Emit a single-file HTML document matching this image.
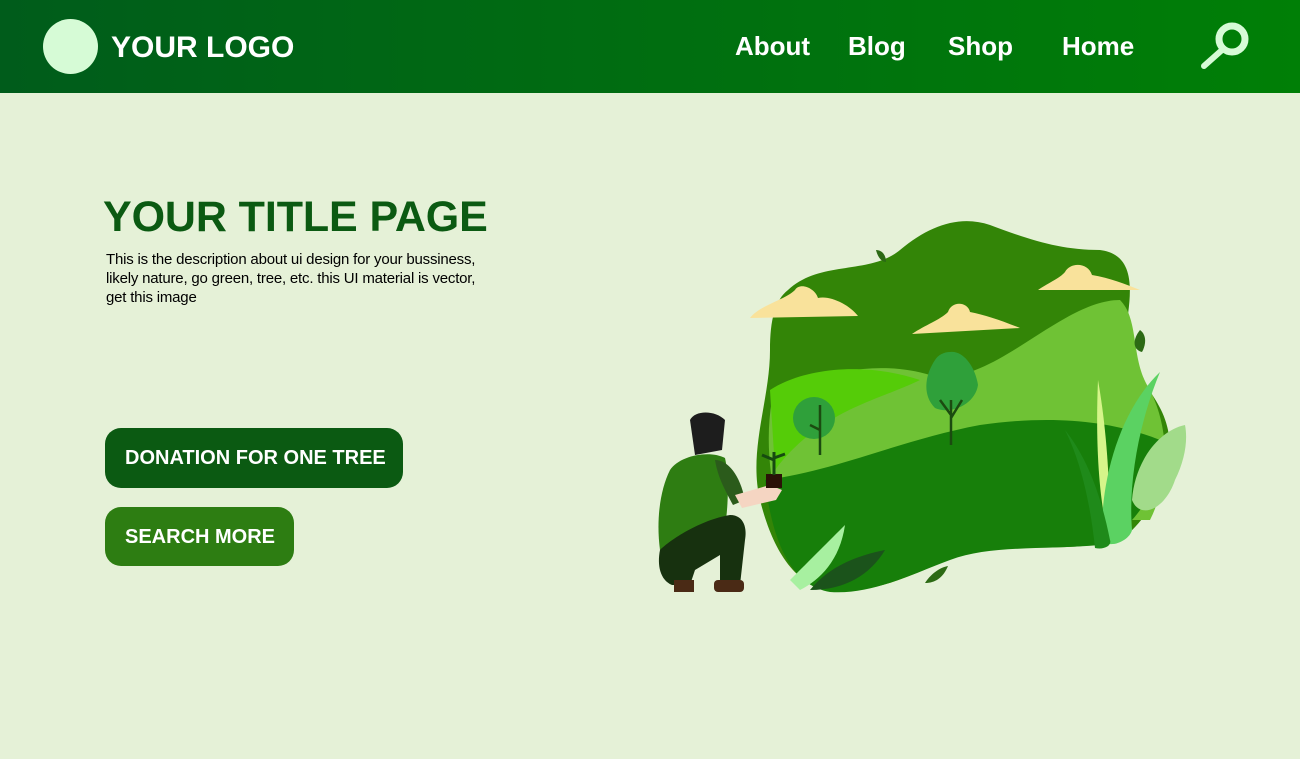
<!DOCTYPE html>
<html><head><meta charset="utf-8"><style>
*{margin:0;padding:0;box-sizing:border-box}
body{width:1300px;height:759px;background:#e5f1d7;font-family:"Liberation Sans",sans-serif;position:relative;overflow:hidden}
.hdr{position:absolute;left:0;top:0;width:1300px;height:93px;background:linear-gradient(90deg,#005c1b,#007f06)}
.logo{position:absolute;left:43px;top:19px;width:55px;height:55px;border-radius:50%;background:#d6fbd6}
.lt{position:absolute;left:111px;top:31px;color:#fff;font-weight:bold;font-size:30px}
.nav{position:absolute;top:31px;color:#fff;font-weight:bold;font-size:26px}
h1{position:absolute;left:103px;top:193px;color:#0b5a12;font-size:43px;font-weight:bold;letter-spacing:-0.1px}
.desc{position:absolute;left:106px;top:250px;font-size:15px;line-height:19px;color:#000;width:386px;letter-spacing:-0.2px}
.btn{position:absolute;color:#fff;font-weight:bold;font-size:20px;border-radius:16px;padding-left:20px;line-height:60px}
</style></head><body>
<div class="hdr"></div>
<div class="logo"></div>
<div class="lt">YOUR LOGO</div>
<div class="nav" style="left:735px">About</div>
<div class="nav" style="left:848px">Blog</div>
<div class="nav" style="left:948px">Shop</div>
<div class="nav" style="left:1062px">Home</div>
<svg style="position:absolute;left:1195px;top:14px" width="65" height="60"><circle cx="37" cy="25" r="13" fill="none" stroke="#d6fbd6" stroke-width="7"/><line x1="27" y1="36" x2="9" y2="52" stroke="#d6fbd6" stroke-width="6" stroke-linecap="round"/></svg>
<h1>YOUR TITLE PAGE</h1>
<div class="desc">This is the description about ui design for your bussiness, likely nature, go green, tree, etc. this UI material is vector, get this image</div>
<div class="btn" style="left:105px;top:428px;width:298px;height:60px;background:#0b5a12">DONATION FOR ONE TREE</div>
<div class="btn" style="left:105px;top:507px;width:189px;height:59px;background:#2d7d12">SEARCH MORE</div>
<svg style="position:absolute;left:0;top:0" width="1300" height="759">
<path d="M788 290 C820 260 870 275 900 250 C930 225 960 215 990 225 C1030 240 1060 250 1100 250 C1140 255 1130 300 1125 335 C1122 370 1160 390 1168 430 C1175 470 1150 520 1120 540 C1060 555 1000 540 960 555 C920 570 880 595 830 590 C790 585 770 540 760 500 C748 450 770 400 770 350 C770 320 775 300 788 290Z" fill="#338507"/>
<path d="M772 400 C820 370 880 360 930 375 C990 390 1060 300 1120 300 C1140 320 1130 360 1150 390 C1170 430 1170 480 1150 520 L780 520 C770 480 765 440 772 400Z" fill="#6fc235"/>
<path d="M770 390 C800 370 860 360 920 380 C880 400 820 410 775 470 Z" fill="#55cc08"/>
<path d="M765 480 C840 470 900 440 980 425 C1050 415 1110 420 1160 440 C1165 490 1130 530 1100 545 C1040 550 990 545 950 560 C910 575 870 595 830 592 C790 585 772 540 765 480Z" fill="#177f0a"/>
<path d="M790 580 C810 560 830 540 845 525 C840 560 820 580 800 590Z" fill="#a7f0a0"/>
<path d="M810 590 C830 565 860 555 885 550 C870 575 845 590 810 590Z" fill="#1b531b"/>
<path d="M750 318 C760 305 785 300 795 290 C800 282 815 288 818 298 C830 295 850 305 858 316 Z" fill="#f9e29b"/>
<path d="M912 334 C925 325 940 320 948 312 C952 300 968 302 970 312 C985 315 1000 320 1020 328 Z" fill="#f9e29b"/>
<path d="M1038 290 C1050 282 1060 278 1065 272 C1070 262 1088 262 1092 275 C1110 278 1125 284 1140 290 Z" fill="#f9e29b"/>
<circle cx="814" cy="418" r="21" fill="#2fa03a"/>
<path d="M935 360 C925 375 922 395 935 408 C950 415 975 405 978 385 C975 365 962 350 950 352 C944 352 938 355 935 360Z" fill="#2fa03a"/>
<path d="M951 400 L951 445 M951 415 L940 400 M951 418 L962 400 M820 405 L820 455 M820 430 L810 425" stroke="#1b4b10" stroke-width="2.5" fill="none"/>
<path d="M1098 380 C1105 420 1110 470 1110 540 C1100 510 1095 450 1098 380Z" fill="#d6f58a"/>
<path d="M1160 372 C1120 410 1100 480 1102 540 C1110 550 1130 540 1132 530 C1128 480 1140 420 1160 372Z" fill="#5bd262"/>
<path d="M1185 425 C1160 430 1135 460 1132 500 C1140 520 1165 510 1175 480 C1185 460 1188 440 1185 425Z" fill="#a2db8a"/>
<path d="M1065 430 C1080 460 1090 500 1095 548 C1105 550 1112 545 1110 540 C1100 490 1085 455 1065 430Z" fill="#1f8a1a"/>
<path d="M1140 330 C1132 340 1133 350 1142 352 C1146 345 1147 335 1140 330Z" fill="#2c6a14"/>
<path d="M876 250 C878 258 882 262 886 262 C886 255 882 250 876 250Z" fill="#2c6a14"/>
<path d="M925 583 C932 572 942 567 948 566 C943 578 935 583 925 583Z" fill="#2c6a14"/>
<path d="M690 420 C695 410 715 410 725 420 L722 450 L695 455 Z" fill="#1d1d1d"/>
<path d="M670 470 C680 455 710 450 725 458 C730 480 728 520 722 540 L660 550 C656 520 660 490 670 470Z" fill="#2e7d12"/>
<path d="M715 460 C728 460 740 475 745 500 L733 505 C725 490 718 478 715 460Z" fill="#2b5b1b"/>
<path d="M735 495 L770 485 L782 490 L776 500 L742 508Z" fill="#f5d5c2"/>
<path d="M660 550 C670 540 700 520 730 515 C745 515 747 530 745 540 L740 585 L720 585 L720 555 L695 570 L690 585 L672 585 C660 580 657 565 660 550Z" fill="#17310f"/>
<rect x="674" y="580" width="20" height="12" fill="#4a2a15"/><rect x="714" y="580" width="30" height="12" rx="4" fill="#4a2a15"/>
<rect x="766" y="474" width="16" height="14" fill="#2b1207"/>
<path d="M774 475 L774 452 M774 460 L762 455 M774 458 L785 454" stroke="#164a10" stroke-width="3" fill="none"/>
</svg>
</body></html>
